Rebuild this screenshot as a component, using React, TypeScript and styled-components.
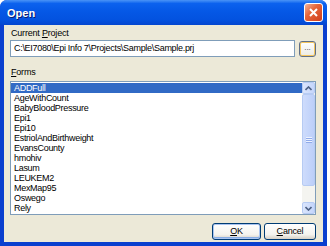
import React from 'react'
import styled, { createGlobalStyle } from 'styled-components'

const forms = [
    "ADDFull",
    "AgeWithCount",
    "BabyBloodPressure",
    "Epi1",
    "Epi10",
    "EstriolAndBirthweight",
    "EvansCounty",
    "hmohiv",
    "Lasum",
    "LEUKEM2",
    "MexMap95",
    "Oswego",
    "Rely",
]

const GlobalStyle = createGlobalStyle`
    html, body {
        margin: 0;
        padding: 0;
        background: #ffffff;
    }
    body {
        font-family: "Liberation Sans", Arial, sans-serif;
        font-size: 9px;
        color: #000;
    }
`

const Window = styled.div`
    width: 327px;
    height: 246px;
    display: flex;
    flex-direction: column;
    background: #0a3fcf;
    border-radius: 7px 7px 0 0;
    box-sizing: border-box;
    overflow: hidden;
`

const TitleBar = styled.div`
    height: 25px;
    flex: none;
    display: flex;
    align-items: center;
    justify-content: space-between;
    padding: 0 4px 0 7px;
    background: linear-gradient(to bottom, #4a94f7 0%, #0c62ee 14%, #0558e6 45%, #0352df 80%, #0446cf 100%);
`

const Title = styled.span`
    color: #fff;
    font-family: "Liberation Sans", Arial, sans-serif;
    font-weight: bold;
    font-size: 11px;
    text-shadow: 1px 1px 0 #0a1e6e;
`

const CloseBtn = styled.div`
    width: 19px;
    height: 19px;
    box-sizing: border-box;
    border: 1px solid #fff;
    border-radius: 3px;
    background: linear-gradient(135deg, #f3b49a 0%, #e6663a 40%, #cf3e1c 100%);
    display: flex;
    align-items: center;
    justify-content: center;
`

const Client = styled.div`
    flex: 1;
    margin: 0 4px 4px 4px;
    background: #ece9d8;
    padding: 3px 6px 0 6px;
    display: flex;
    flex-direction: column;
`

const Label = styled.div<{ $gap?: number }>`
    height: 11px;
    line-height: 11px;
    margin-top: ${p => p.$gap ?? 0}px;
    padding-left: 1px;
    letter-spacing: -0.2px;
    u { text-decoration: underline; }
`

const PathRow = styled.div`
    display: flex;
    align-items: center;
    gap: 4px;
    margin-top: 1px;
`

const TextBox = styled.div`
    width: 285px;
    height: 17px;
    box-sizing: border-box;
    border: 1px solid #7f9db9;
    background: #fff;
    padding-left: 3px;
    line-height: 15px;
    letter-spacing: -0.3px;
    white-space: nowrap;
    overflow: hidden;
`

const DotsBtn = styled.div`
    width: 17px;
    height: 16px;
    box-sizing: border-box;
    border: 1px solid #5f6f88;
    border-radius: 3px;
    box-shadow: inset 0 0 0 1px #f5c55c;
    background: linear-gradient(to bottom, #ffffff, #ecebe3);
    font-size: 8px;
    line-height: 12px;
    text-align: center;
    color: #333;
`

const ListBox = styled.div`
    margin-top: 3px;
    width: 306px;
    height: 134px;
    box-sizing: border-box;
    border: 1px solid #7f9db9;
    background: #fff;
    display: flex;
`

const Items = styled.div`
    flex: 1;
    padding-top: 1px;
`

const Item = styled.div<{ $selected?: boolean }>`
    height: 10px;
    line-height: 10px;
    padding-left: 3px;
    letter-spacing: -0.3px;
    background: ${p => (p.$selected ? '#316ac5' : 'transparent')};
    color: ${p => (p.$selected ? '#fff' : '#000')};
    white-space: nowrap;
`

const ScrollBar = styled.div`
    width: 13px;
    display: flex;
    flex-direction: column;
    background: #f4f4f0;
`

const ArrowBtn = styled.div`
    height: 12px;
    box-sizing: border-box;
    border: 1px solid #b6cbf3;
    border-radius: 2px;
    background: linear-gradient(to right, #dbe6fd, #c4d5fb);
    display: flex;
    align-items: center;
    justify-content: center;
`

const Thumb = styled.div`
    height: 92px;
    box-sizing: border-box;
    border: 1px solid #b6cbf3;
    border-radius: 2px;
    background: linear-gradient(to right, #cedcfc, #bccff9);
    display: flex;
    align-items: center;
    justify-content: center;
`

const Grip = styled.div`
    width: 6px;
    height: 6px;
    background: repeating-linear-gradient(to bottom, #eef3fe 0 1px, #8faaea 1px 2px);
`

const Track = styled.div`
    flex: 1;
`

const ButtonRow = styled.div`
    display: flex;
    justify-content: flex-end;
    gap: 3px;
    margin-top: 8px;
    padding-right: 1px;
`

const Button = styled.div<{ $default?: boolean }>`
    width: ${p => (p.$default ? 49 : 52)}px;
    height: 17px;
    box-sizing: border-box;
    border: 1px solid #003c74;
    border-radius: 3px;
    background: linear-gradient(to bottom, #ffffff 0%, #f4f3ee 70%, #d6d0c5 100%);
    box-shadow: ${p => (p.$default ? 'inset 0 0 0 1px #a9c4f0, inset 0 -1px 0 1px #89ade4' : 'none')};
    text-align: center;
    line-height: 15px;
    letter-spacing: -0.2px;
`

const Chevron = ({ up }: { up?: boolean }) => (
    <svg width="7" height="5" viewBox="0 0 7 5">
        <path d={up ? "M0.5 4 L3.5 1 L6.5 4" : "M0.5 1 L3.5 4 L6.5 1"} stroke="#4d6185" strokeWidth="1.6" fill="none" />
    </svg>
)

export default function App() {
    return (
        <>
            <GlobalStyle />
            <Window>
                <TitleBar>
                    <Title>Open</Title>
                    <CloseBtn>
                        <svg width="11" height="11" viewBox="0 0 11 11">
                            <path d="M2 2 L9 9 M9 2 L2 9" stroke="#fff" strokeWidth="2" />
                        </svg>
                    </CloseBtn>
                </TitleBar>
                <Client>
                    <Label>Current <u>P</u>roject</Label>
                    <PathRow>
                        <TextBox>C:\EI7080\Epi Info 7\Projects\Sample\Sample.prj</TextBox>
                        <DotsBtn>...</DotsBtn>
                    </PathRow>
                    <Label $gap={10}><u>F</u>orms</Label>
                    <ListBox>
                        <Items>
                            {forms.map((f, i) => (
                                <Item key={f} $selected={i === 0}>{f}</Item>
                            ))}
                        </Items>
                        <ScrollBar>
                            <ArrowBtn><Chevron up /></ArrowBtn>
                            <Thumb><Grip /></Thumb>
                            <Track />
                            <ArrowBtn><Chevron /></ArrowBtn>
                        </ScrollBar>
                    </ListBox>
                    <ButtonRow>
                        <Button $default><u>O</u>K</Button>
                        <Button><u>C</u>ancel</Button>
                    </ButtonRow>
                </Client>
            </Window>
        </>
    )
}
